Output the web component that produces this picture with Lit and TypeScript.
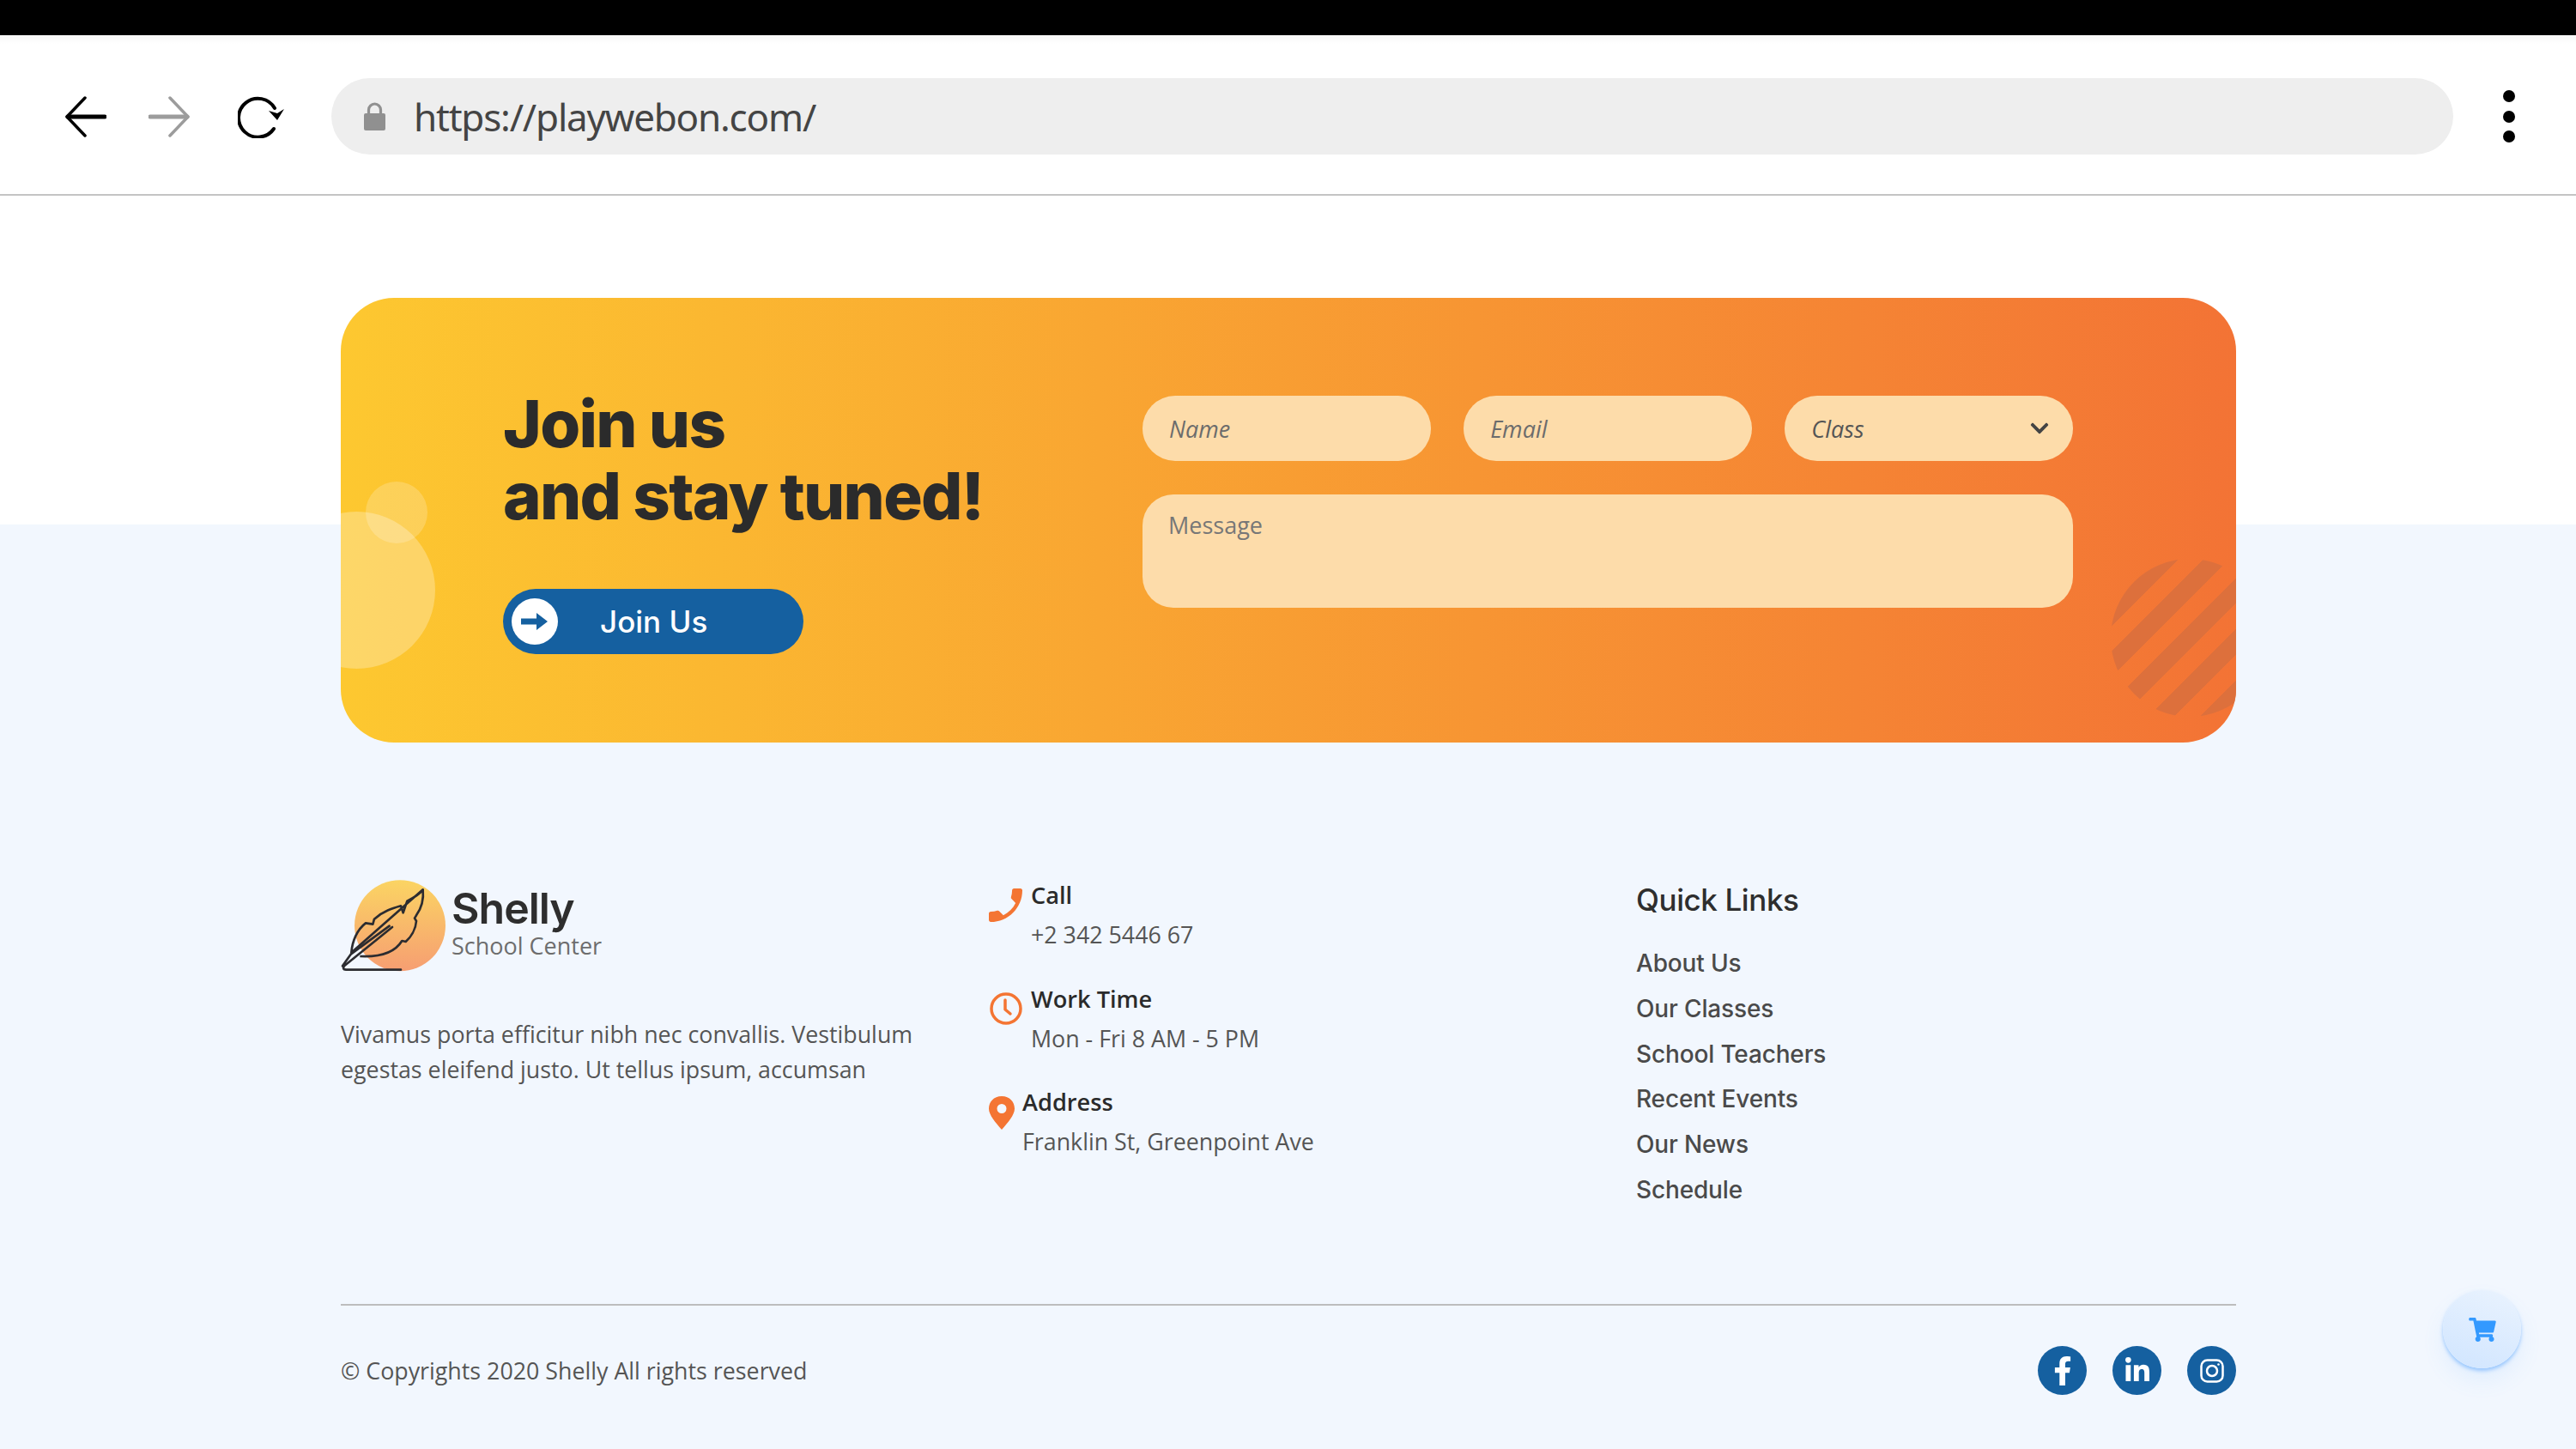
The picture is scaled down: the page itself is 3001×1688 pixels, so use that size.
import { LitElement, html, css, svg } from "lit";
import { customElement } from "lit/decorators.js";

const LINKS = ["About Us", "Our Classes", "School Teachers", "Recent Events", "Our News", "Schedule"];

@customElement("app-root")
export class AppRoot extends LitElement {
  static styles = css`
    :host { display: block; width: 3001px; height: 1688px; overflow: hidden; position: relative; background: #f2f7fe; font-family: "Open Sans", sans-serif; color: #555; }
    * { box-sizing: border-box; }
    .topbar { height: 41px; background: #000; }
    .toolbar { height: 187px; background: linear-gradient(#f7f7f7, #fff 10px); border-bottom: 2px solid #c4c4c4; display: flex; align-items: center; padding: 4px 0 0 76px; }
    .toolbar svg { display: block; flex: none; }
    .fwd { margin-left: 49px; }
    .reload { margin-left: 56px; }
    .url { margin-left: 55px; width: 2472px; height: 89px; border-radius: 45px; background: #eee; display: flex; align-items: center; padding-left: 38px; }
    .url span { margin-left: 33px; font: 44px "Noto Sans", sans-serif; color: #444; letter-spacing: -1.2px; white-space: nowrap; }
    .dots { margin-left: 58px; display: flex; flex-direction: column; gap: 9.5px; }
    .dots i { width: 14px; height: 14px; border-radius: 50%; background: #000; display: block; }

    main { padding: 119px 396px 0 397px; background: linear-gradient(#fff 383px, #f2f7fe 383px); height: 1460px; }
    .card { position: relative; overflow: hidden; height: 518px; border-radius: 62px; background: linear-gradient(to right, #fdc830, #f37335); display: flex; padding: 114px 0 0 189px; }
    .big, .small, .stripes { position: absolute; border-radius: 50%; }
    .big { width: 183px; height: 183px; left: -73px; top: 249px; background: rgba(255,255,255,.27); }
    .small { width: 72px; height: 72px; left: 29px; top: 214px; background: rgba(255,255,255,.2); }
    .stripes { width: 184px; height: 184px; left: 2062px; top: 304px; background: repeating-linear-gradient(135deg, #dd703c 0 14px, transparent 14px 35px, #dd703c 35px 42px); }
    .cta { width: 745px; flex: none; }
    h1 { margin: -10px 0 0; font: 800 76px/84px Inter, sans-serif; color: #2b2b2b; letter-spacing: -1.7px; }
    .join { margin-top: 67px; width: 350px; height: 76px; border-radius: 38px; background: #1560a0; display: flex; align-items: center; padding-left: 10px; color: #fff; font: 500 35px Inter, sans-serif; }
    .join .ci { width: 54px; height: 54px; border-radius: 50%; background: #fff; display: flex; align-items: center; justify-content: center; margin-right: 49px; }
    form { width: 1084px; display: grid; grid-template-columns: repeat(3, 1fr); column-gap: 38.5px; row-gap: 39px; align-content: start; position: relative; }
    input, textarea, .sel { height: 76px; border: 0; border-radius: 38px; background: #fddcaa; padding: 0 31px; font: italic 27px "Open Sans", sans-serif; color: #666; outline: none; min-width: 0; width: 100%; }
    input::placeholder { color: #6c6c6c; opacity: 1; font-style: italic; }
    .sel { display: flex; align-items: center; justify-content: space-between; padding-right: 27px; color: #555; }
    textarea { grid-column: 1 / -1; height: 132px; border-radius: 36px; padding: 17px 30px; font-style: normal; resize: none; }
    textarea::placeholder { color: #777; opacity: 1; }

    .footer { display: grid; grid-template-columns: 753px 756px 1fr; margin-top: 158px; height: 496px; }
    .logo { display: flex; height: 111px; }
    .logo-t { margin-left: 5px; padding-top: 7px; }
    .logo-t b { display: block; font: 600 50px/56px Inter, sans-serif; color: #2e2e2e; letter-spacing: -1px; }
    .logo-t span { display: block; font: 27px/32px "Open Sans", sans-serif; color: #6d6d6d; }
    .about { margin: 49.5px 0 0; font-size: 26.8px; line-height: 41.5px; color: #555; white-space: nowrap; }
    .contact { display: flex; flex-direction: column; gap: 34.5px; }
    .row { display: flex; align-items: flex-start; }
    .row svg { flex: none; }
    .row b { display: block; font: 600 27.2px/40px "Open Sans", sans-serif; color: #2b2b2b; }
    .row span { display: block; font-size: 26.8px; line-height: 40px; margin-top: 6px; color: #555; white-space: nowrap; }
    .i-phone { width: 39px; height: 39px; margin: 12px 10px 0 2px; }
    .i-clock { width: 51px; height: 38px; margin-top: 12px; }
    .i-pin { width: 41px; height: 39px; margin-top: 13px; }
    .links h3 { margin: 3px 0 0; font: 500 35px/44px Inter, sans-serif; color: #2e2e2e; letter-spacing: -0.4px; }
    .links ul { list-style: none; margin: 26px 0 0; padding: 0; }
    .links li { height: 52.8px; font: 500 28px/52.8px Inter, sans-serif; color: #4a4a4a; letter-spacing: -0.15px; }

    .bottom { border-top: 2px solid #bdbdbd; display: flex; align-items: center; justify-content: space-between; padding-top: 47px; }
    .copy { font-size: 26.8px; color: #555; }
    .social { display: flex; gap: 30px; }
    .social a { width: 57px; height: 57px; border-radius: 50%; background: #1560a0; display: flex; align-items: center; justify-content: center; }
    .cart { position: absolute; left: 2846px; top: 1503px; width: 91px; height: 91px; border-radius: 50%; background: linear-gradient(20deg, #d0e5ff, #eaf3fe); box-shadow: 0 3px 4px rgba(90,165,255,.55), 0 14px 26px rgba(90,165,255,.1); display: flex; align-items: center; justify-content: center; }
  `;

  private feather() {
    return svg`<svg width="125" height="110" viewBox="45 65 375 330" style="flex:none;margin-left:-1px">
      <defs><linearGradient id="lg" x1="0" y1="0" x2="0" y2="1"><stop offset="0" stop-color="#fbd463"/><stop offset="1" stop-color="#f69e72"/></linearGradient></defs>
      <circle cx="255" cy="231" r="159" fill="url(#lg)"/>
      <path d="M335 105 C338 135 333 165 312 195 L306 205 L312 215 C310 245 292 272 275 287 L262 284 C240 320 195 342 115 338 M85 325 C88 285 105 245 135 222 L160 226 L165 208 C195 180 230 170 258 162 L266 186 L280 145 C300 135 320 125 335 105 Z" fill="none" stroke="#2c2c30" stroke-width="8" stroke-linejoin="round"/>
      <path d="M228 236 L60 372 Q52 384 66 385 L258 385 M218 232 L84 330 L54 372" fill="none" stroke="#2c2c30" stroke-width="8" stroke-linecap="round" stroke-linejoin="round"/>
    </svg>`;
  }

  render() {
    return html`
      <div class="topbar"></div>
      <div class="toolbar">
        <svg width="48" height="48" viewBox="0 0 48 48" fill="none" stroke="#000" stroke-linecap="round" stroke-linejoin="round"><path d="M23 2 L2 24 L23 46" stroke-width="3.5"/><path d="M3 24 H46" stroke-width="5"/></svg>
        <svg class="fwd" width="48" height="48" viewBox="0 0 48 48" fill="none" stroke="#9c9c9c" stroke-linecap="round" stroke-linejoin="round"><path d="M25 2 L46 24 L25 46" stroke-width="3.5"/><path d="M2 24 H45" stroke-width="5"/></svg>
        <svg class="reload" width="54" height="50" viewBox="0 0 54 50" fill="none"><path d="M43 15 A22.500 22.500 0 1 0 42 39" stroke="#000" stroke-width="4" stroke-linecap="round"/><path d="M36 18 L46 29 L54 16 L46 21 Z" fill="#000"/></svg>
        <div class="url">
          <svg width="25" height="33" viewBox="0 0 25 33" fill="none"><path d="M5.500 15 V9 a7 7 0 0 1 14 0 V15" stroke="#909090" stroke-width="3.200"/><rect x="0" y="13" width="25" height="20" rx="2" fill="#909090"/></svg>
          <span>https://playwebon.com/</span>
        </div>
        <div class="dots"><i></i><i></i><i></i></div>
      </div>

      <main>
        <section class="card">
          <div class="big"></div><div class="small"></div><div class="stripes"></div>
          <div class="cta">
            <h1>Join us<br />and stay tuned!</h1>
            <div class="join">
              <span class="ci"><svg width="32" height="22" viewBox="0 0 32 22"><path d="M0 7.500 H18 V1 L31 11 L18 21 V14.500 H0 Z" fill="#1560a0"/></svg></span>
              Join Us
            </div>
          </div>
          <form>
            <input placeholder="Name" />
            <input placeholder="Email" />
            <div class="sel">Class
              <svg width="24" height="24" viewBox="0 0 448 512"><path fill="#444" d="M207.029 381.476L12.686 187.132c-9.373-9.373-9.373-24.569 0-33.941l22.667-22.667c9.357-9.357 24.522-9.375 33.901-.04L224 284.505l154.745-154.021c9.379-9.335 24.544-9.317 33.901.04l22.667 22.667c9.373 9.373 9.373 24.569 0 33.941L240.971 381.476c-9.373 9.372-24.569 9.372-33.942 0z"/></svg>
            </div>
            <textarea placeholder="Message"></textarea>
          </form>
        </section>

        <section class="footer">
          <div>
            <div class="logo">${this.feather()}
              <div class="logo-t"><b>Shelly</b><span>School Center</span></div>
            </div>
            <p class="about">Vivamus porta efficitur nibh nec convallis. Vestibulum<br />egestas eleifend justo. Ut tellus ipsum, accumsan</p>
          </div>
          <div class="contact">
            <div class="row">
              <svg class="i-phone" viewBox="3 3 18 18"><path transform="matrix(-1 0 0 1 24 0)" fill="#f47533" d="M6.620 10.790c1.440 2.830 3.760 5.140 6.590 6.590l2.200-2.200c.270-.270.670-.360 1.020-.240 1.120.370 2.330.570 3.570.570.550 0 1 .450 1 1V20c0 .550-.450 1-1 1-9.390 0-17-7.610-17-17 0-.550.450-1 1-1h3.500c.550 0 1 .450 1 1 0 1.250.200 2.450.570 3.570.110.350.030.740-.250 1.020l-2.200 2.200z"/></svg>
              <div><b>Call</b><span>+2 342 5446 67</span></div>
            </div>
            <div class="row">
              <svg class="i-clock" viewBox="0 0 51 38"><circle cx="22" cy="19" r="17" fill="none" stroke="#f47533" stroke-width="3.500"/><path d="M21 9 V20 L27 25" fill="none" stroke="#f47533" stroke-width="3.500" stroke-linecap="round" stroke-linejoin="round"/></svg>
              <div><b>Work Time</b><span>Mon - Fri 8 AM - 5 PM</span></div>
            </div>
            <div class="row">
              <svg class="i-pin" viewBox="0 0 41 39"><path fill="#f47533" fill-rule="evenodd" d="M17 0 C7.500 0 2 7 2 14.500 C2 22 10 31 17 39 C24 31 32 22 32 14.500 C32 7 26.500 0 17 0 Z M17 9 A5.500 5.500 0 1 1 17 20 A5.500 5.500 0 1 1 17 9 Z"/></svg>
              <div><b>Address</b><span>Franklin St, Greenpoint Ave</span></div>
            </div>
          </div>
          <div class="links">
            <h3>Quick Links</h3>
            <ul>${LINKS.map((l) => html`<li>${l}</li>`)}</ul>
          </div>
        </section>

        <section class="bottom">
          <span class="copy">© Copyrights 2020 Shelly All rights reserved</span>
          <div class="social">
            <a><svg width="22" height="34" viewBox="0 0 320 512"><path fill="#fff" d="M279.140 288l14.220-92.660h-88.910v-60.130c0-25.350 12.420-50.060 52.240-50.060h40.420V6.260S260.430 0 225.360 0c-73.220 0-121.080 44.380-121.080 124.720v70.620H22.890V288h81.390v224h100.170V288z"/></svg></a>
            <a><svg width="28" height="32" viewBox="0 0 448 512"><path fill="#fff" d="M100.280 448H7.400V148.900h92.880zM53.790 108.100C24.090 108.100 0 83.500 0 53.800a53.790 53.790 0 0 1 107.580 0c0 29.700-24.100 54.300-53.790 54.300zM447.900 448h-92.680V302.400c0-34.700-.700-79.200-48.290-79.200-48.290 0-55.690 37.700-55.690 76.700V448h-92.780V148.900h89.080v40.800h1.300c12.400-23.500 42.690-48.300 87.880-48.300 94 0 111.280 61.900 111.280 142.300V448z"/></svg></a>
            <a><svg width="28" height="28" viewBox="0 0 28 28" fill="none" stroke="#fff" stroke-width="2.500"><rect x="1.500" y="1.500" width="25" height="25" rx="7"/><circle cx="14" cy="14" r="6"/><circle cx="21.500" cy="6.500" r="1.300" fill="#fff" stroke="none"/></svg></a>
          </div>
        </section>
      </main>

      <div class="cart"><svg width="32" height="28" viewBox="0 0 576 512"><path fill="#3399ff" d="M528.120 301.319l47.273-208C578.806 78.301 567.391 64 551.990 64H159.208l-9.166-44.810C147.758 8.021 137.930 0 126.529 0H24C10.745 0 0 10.745 0 24v16c0 13.255 10.745 24 24 24h69.883l70.248 343.435C147.325 417.100 136 435.222 136 456c0 30.928 25.072 56 56 56s56-25.072 56-56c0-15.674-6.447-29.835-16.824-40h209.647C430.447 426.165 424 440.326 424 456c0 30.928 25.072 56 56 56s56-25.072 56-56c0-22.172-12.888-41.332-31.579-50.405l5.517-24.276c3.413-15.018-8.002-29.319-23.403-29.319H218.117l-6.545-32h293.145c11.206 0 20.920-7.754 23.403-18.681z"/></svg></div>
    `;
  }
}
